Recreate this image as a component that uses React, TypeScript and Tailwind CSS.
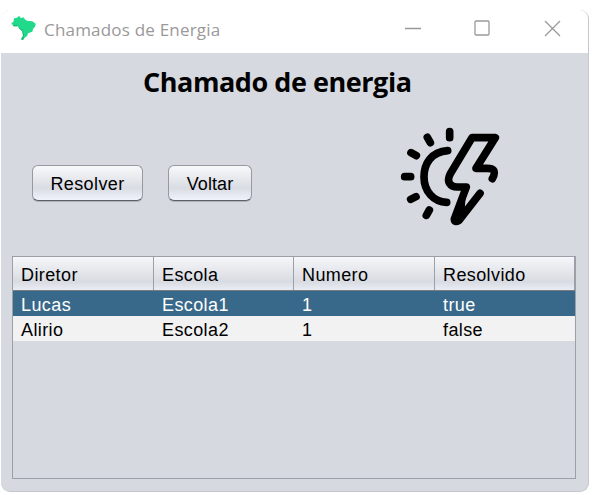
const columns = [
  { title: "Diretor", width: "w-[141px]" },
  { title: "Escola", width: "w-[140px]" },
  { title: "Numero", width: "w-[141px]" },
  { title: "Resolvido", width: "w-[140px]" },
];

const rows = [
  { cells: ["Lucas", "Escola1", "1", "true"], selected: true },
  { cells: ["Alirio", "Escola2", "1", "false"], selected: false },
];

function BrazilIcon() {
  return (
    <svg width="26" height="26" viewBox="0 0 78 78" className="mb-[7px] shrink-0">
      <path d="M1 24 L7 21 L9 10 L17 9 L20 5 L27 4 L29 10 L37 7 L43 14 L48 17 L64 19 L74 26 L73 34 L66 42 L64 50 L51 55 L49 62 L41 68 L36 76 L30 72 L36 63 L34 49 L24 40 L21 34 L8 34 Z" fill="#20d98a" />
      <path d="M1 24 L4 29 L18 30 L25 38 L35 44 L39 59 L36 76 L30 72 L36 63 L34 49 L24 40 L21 34 L8 34 Z" fill="#18ba72" />
    </svg>
  );
}

function EnergyIcon() {
  return (
    <svg width="120" height="120" viewBox="0 0 360 360" fill="none" stroke="#000" strokeWidth="23" strokeLinecap="round" strokeLinejoin="round">
      <path d="M173 107 C124 111 102 145 102 186 C102 228 130 261 170 262" />
      <path d="M179 50 V68 M112 67 L121 83 M63 113 L79 122 M44 185 H62 M62 253 L78 245 M109 301 L118 285" />
      <path d="M307 191 C321 165 309 160 291 160 H258 L316 68 H246 L180 178 C169 201 181 216 201 216 H229 L193 312 Q193 324 207 316 L270 235" />
      <path d="M229 216 L195 312 L205 316 L224 285 Z" fill="#000" stroke="none" />
    </svg>
  );
}

function SwingButton({ label, width, spacing }: { label: string; width: string; spacing: string }) {
  return (
    <button className={`h-[36px] rounded-[6px] border border-[#96999f] border-b-[#5d6066] bg-linear-to-b from-[#f8f9fa] via-[#d9dce3] via-65% to-[#f0f3fb] pt-px text-[18px] leading-[34px] text-black shadow-[0_1px_0_#b0b3ba] ${width} ${spacing}`}>
      {label}
    </button>
  );
}

export default function App() {
  return (
    <div className="h-[495px] w-[592px] overflow-hidden bg-white pt-[10px] pl-px font-['Liberation_Sans',Arial,sans-serif] text-[18px]">
      <div className="flex h-[482px] w-[588px] flex-col overflow-hidden rounded-[9px] border-r border-b border-[#c5c7cc] bg-[#d6d9e0]">
        <header className="flex h-[43px] shrink-0 items-center bg-white pl-[10px] text-[#999]">
          <BrazilIcon />
          <span className="mb-[4px] ml-[7px] font-['Open_Sans','Noto_Sans',sans-serif] text-[17px] leading-[22px] tracking-[0.2px] whitespace-nowrap">Chamados de Energia</span>
          <svg className="mr-[27px] mb-[6px] ml-auto" width="156" height="18" viewBox="0 0 156 18" fill="none" stroke="#999" strokeWidth="1.3">
            <path d="M0 8.5 H16 M140 1 L155 16 M155 1 L140 16" />
            <rect x="70" y="1" width="14" height="14" rx="1" />
          </svg>
        </header>
        <h1 className="ml-[142px] h-[62px] pt-[10px] font-['Open_Sans','Noto_Sans',sans-serif] text-[27px] leading-[38px] font-bold tracking-[-0.45px] whitespace-nowrap text-black">Chamado de energia</h1>
        <section className="flex h-[120px] shrink-0">
          <div className="flex w-[389px] gap-[25px] pt-[50px] pl-[31px]">
            <SwingButton label="Resolver" width="w-[111px]" spacing="tracking-[0.4px]" />
            <SwingButton label="Voltar" width="w-[84px]" spacing="tracking-[0.1px]" />
          </div>
          <EnergyIcon />
        </section>
        <section className="mt-[21px] ml-[11px] h-[223px] w-[564px] shrink-0 border border-[#9a9fa8]">
          <div className="flex h-[34px] border-b border-[#777b82] bg-linear-to-b from-[#f6f7fa] via-[#d8dbe1] via-75% to-[#eaedf5]">
            {columns.map((column) => (
              <div key={column.title} className={`border-r border-[#9b9fa7] pt-px pl-[8px] leading-[35px] tracking-[0.4px] text-black ${column.width}`}>{column.title}</div>
            ))}
          </div>
          {rows.map((row) => (
            <div key={row.cells[0]} className={row.selected ? "flex h-[25px] bg-[#39698a] text-white" : "flex h-[25px] bg-[#f2f2f2] text-black"}>
              {row.cells.map((cell, index) => (
                <div key={columns[index].title} className={`pt-px pl-[8px] leading-[27px] tracking-[0.4px] ${columns[index].width}`}>{cell}</div>
              ))}
            </div>
          ))}
        </section>
      </div>
    </div>
  );
}
